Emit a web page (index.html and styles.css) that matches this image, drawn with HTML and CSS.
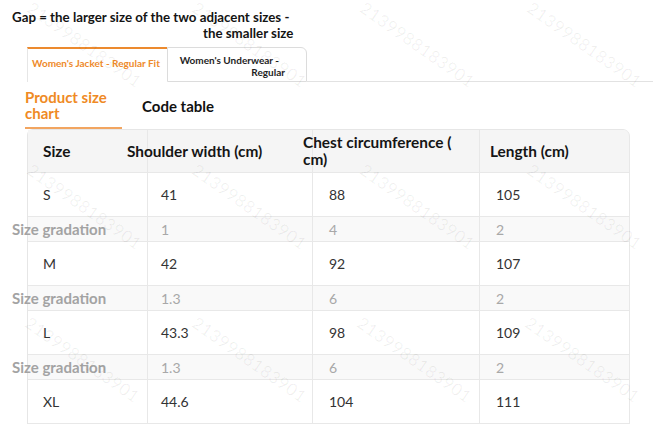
FILE: index.html
```html
<!DOCTYPE html>
<html lang="en">
<head>
<meta charset="utf-8">
<title>Size chart</title>
<link rel="stylesheet" href="styles.css">
</head>
<body>
<div class="page">
  <p class="note"><span class="note-l1">Gap = the larger size of the two adjacent sizes -</span><span class="note-l2">the smaller size</span></p>
  <div class="tabs">
    <div class="tab tab-active">Women's Jacket - Regular Fit</div>
    <div class="tab tab-idle"><span class="tab-l1">Women's Underwear -</span><span class="tab-l2">Regular</span></div>
    <div class="tab-fill"></div>
  </div>
  <div class="subnav">
    <div class="sub sub-active">Product size chart</div>
    <div class="sub">Code table</div>
  </div>
  <div class="table">
    <div class="th c1"><span class="lbl">Size</span></div>
    <div class="th c2"><span class="lbl lbl-2">Shoulder width (cm)</span></div>
    <div class="th c3"><span class="lbl lbl-3">Chest circumference ( cm)</span></div>
    <div class="th c4"><span class="lbl lbl-4">Length (cm)</span></div>

    <div class="td c1">S</div><div class="td c2">41</div><div class="td c3">88</div><div class="td c4">105</div>
    <div class="tg c1"><span class="glabel">Size gradation</span></div><div class="tg c2">1</div><div class="tg c3">4</div><div class="tg c4">2</div>

    <div class="td c1">M</div><div class="td c2">42</div><div class="td c3">92</div><div class="td c4">107</div>
    <div class="tg c1"><span class="glabel">Size gradation</span></div><div class="tg c2">1.3</div><div class="tg c3">6</div><div class="tg c4">2</div>

    <div class="td c1">L</div><div class="td c2">43.3</div><div class="td c3">98</div><div class="td c4">109</div>
    <div class="tg c1"><span class="glabel">Size gradation</span></div><div class="tg c2">1.3</div><div class="tg c3">6</div><div class="tg c4">2</div>

    <div class="td c1">XL</div><div class="td c2">44.6</div><div class="td c3">104</div><div class="td c4">111</div>
  </div>

  <div class="watermarks" aria-hidden="true">
    <span class="wm" style="left:35px;top:-2px">2139988183901</span>
    <span class="wm" style="left:200px;top:-2px">2139988183901</span>
    <span class="wm" style="left:368px;top:-2px">2139988183901</span>
    <span class="wm" style="left:535px;top:-2px">2139988183901</span>
    <span class="wm" style="left:35px;top:160px">2139988183901</span>
    <span class="wm" style="left:200px;top:160px">2139988183901</span>
    <span class="wm" style="left:368px;top:160px">2139988183901</span>
    <span class="wm" style="left:535px;top:160px">2139988183901</span>
    <span class="wm" style="left:33px;top:313px">2139988183901</span>
    <span class="wm" style="left:200px;top:313px">2139988183901</span>
    <span class="wm" style="left:365px;top:313px">2139988183901</span>
    <span class="wm" style="left:533px;top:313px">2139988183901</span>
  </div>
</div>
</body>
</html>
```
FILE: styles.css
```css
html, body {
  margin: 0;
  padding: 0;
  background: #fff;
}
body {
  font-family: Lato, "Open Sans", "Liberation Sans", sans-serif;
  color: #333;
}
.page {
  position: relative;
  height: 426px;
  overflow: hidden;
  padding-top: 9px;
  box-sizing: border-box;
}
.note {
  display: flex;
  flex-direction: column;
  align-items: flex-end;
  width: max-content;
  margin: 0 0 0 12px;
  font-size: 13.3px;
  line-height: 16px;
  font-weight: 700;
  color: #141414;
}
.note-l1 {
  padding-right: 4px;
  white-space: nowrap;
}
.note-l2 {
  white-space: nowrap;
}
.tabs {
  display: flex;
  margin: 6px 0 0 27px;
  height: 35px;
}
.tab {
  width: 140px;
  box-sizing: border-box;
  font-size: 10px;
  line-height: 12px;
  font-weight: 700;
}
.tab-active {
  border-top: 2px solid #ec8a2e;
  border-left: 1px solid #e6e6e6;
  color: #ee8a2a;
  padding: 8px 0 0 4px;
  background: #fff;
}
.tab-idle {
  display: flex;
  flex-direction: column;
  align-items: flex-end;
  border: 1px solid #dcdcdc;
  border-radius: 0 6px 0 0;
  color: #1e1e1e;
  padding: 6px 21px 0 0;
}
.tab-l1 {
  padding-right: 6px;
  white-space: nowrap;
}
.tab-fill {
  flex: 1;
  border-bottom: 1px solid #e2e2e2;
}
.subnav {
  display: flex;
  align-items: center;
  margin-left: 25px;
}
.sub {
  font-size: 15px;
  line-height: 16px;
  font-weight: 700;
  color: #111;
}
.sub-active {
  width: 97px;
  color: #ef8a24;
  padding: 7px 0 6px;
  border-bottom: 2px solid #f2a560;
  margin-right: 20px;
}
.table {
  display: grid;
  grid-template-columns: 120px 165px 167px 150px;
  margin-left: 27px;
  width: 602px;
  border-left: 1px solid #e6e6e6;
  border-top: 1px solid #e6e6e6;
  border-radius: 6px 6px 0 0;
  box-sizing: border-box;
}
.th, .td, .tg {
  display: flex;
  align-items: center;
  box-sizing: border-box;
  border-right: 1px solid #e8e8e8;
  border-bottom: 1px solid #e8e8e8;
  padding: 0 16px;
  font-size: 14px;
}
.th {
  height: 43px;
  background: #f5f5f5;
  font-weight: 700;
  font-size: 15.4px;
  color: #151515;
  line-height: 17px;
}
.th.c4 {
  border-top-right-radius: 6px;
}
.lbl {
  display: block;
}
.lbl-2 {
  margin-left: -37px;
  white-space: nowrap;
}
.lbl-3 {
  margin-left: -26px;
  width: 158px;
}
.lbl-4 {
  margin-left: -6px;
  white-space: nowrap;
}
.td {
  height: 44px;
  color: #333;
  background: #fff;
}
.tg {
  height: 25px;
  color: #a8a8a8;
  background: #f9f9f9;
}
.c1 { padding-left: 15px; }
.td.c2, .tg.c2 { padding-left: 13px; }
.glabel {
  margin-left: -31px;
  white-space: nowrap;
  font-weight: 700;
  font-size: 15px;
  color: #a3a3a3;
}
.watermarks {
  position: absolute;
  inset: 0;
  pointer-events: none;
}
.wm {
  position: absolute;
  font-size: 17px;
  line-height: 20px;
  letter-spacing: 0.5px;
  color: rgba(0, 0, 0, 0.06);
  transform: rotate(35deg);
  transform-origin: 0 0;
  white-space: nowrap;
}
```
